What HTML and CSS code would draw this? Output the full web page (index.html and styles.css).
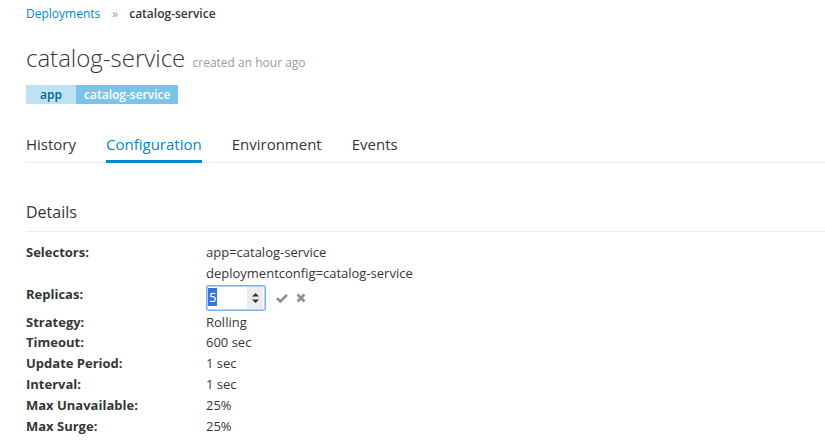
FILE: index.html
```html
<!DOCTYPE html>
<html>
<head>
<meta charset="utf-8">
<link rel="stylesheet" href="styles.css">
</head>
<body>
<div class="page">
  <ol class="breadcrumb">
    <li><a href="#">Deployments</a></li>
    <li class="sep">»</li>
    <li class="current">catalog-service</li>
  </ol>
  <h1 class="title">catalog-service <small>created an hour ago</small></h1>
  <div class="labels">
    <span class="lbl-key">app</span><span class="lbl-val">catalog-service</span>
  </div>
  <ul class="tabs">
    <li>History</li>
    <li class="active">Configuration</li>
    <li>Environment</li>
    <li>Events</li>
  </ul>
  <h2 class="section">Details</h2>
  <dl class="details">
    <dt>Selectors:</dt>
    <dd>app=catalog-service<br>deploymentconfig=catalog-service</dd>
    <dt>Replicas:</dt>
    <dd class="replicas-dd">
      <span class="spin"><span class="spin-val"><span class="sel">5</span></span><span class="spin-btn"><svg width="9" height="14" viewBox="0 0 9 14"><path d="M1 5.5 L4.5 2 L8 5.5 Z" fill="#333"/><path d="M1 8.5 L4.5 12 L8 8.5 Z" fill="#333"/></svg></span></span>
      <svg class="ico" width="12" height="10" viewBox="0 0 12 10"><path d="M1 5.2 L4.3 8.5 L11 1.8" fill="none" stroke="#8b8d8f" stroke-width="2.6"/></svg>
      <svg class="ico" width="10" height="10" viewBox="0 0 10 10"><path d="M1.5 1.5 L8.5 8.5 M8.5 1.5 L1.5 8.5" stroke="#8b8d8f" stroke-width="2.6"/></svg>
    </dd>
    <dt>Strategy:</dt><dd>Rolling</dd>
    <dt>Timeout:</dt><dd>600 sec</dd>
    <dt>Update Period:</dt><dd>1 sec</dd>
    <dt>Interval:</dt><dd>1 sec</dd>
    <dt>Max Unavailable:</dt><dd>25%</dd>
    <dt>Max Surge:</dt><dd>25%</dd>
  </dl>
</div>
</body>
</html>
```
FILE: styles.css
```css
html, body { margin: 0; padding: 0; background: #fff; }
body {
  font-family: "Open Sans", "Noto Sans", sans-serif;
  font-size: 12px;
  color: #363636;
  overflow: hidden;
}
.page { padding: 0 0 0 26px; }
.breadcrumb {
  list-style: none; margin: 0; padding: 4px 0 0;
  display: flex; align-items: center; height: 20px; line-height: 20px;
}
.breadcrumb a { color: #0088ce; text-decoration: none; }
.breadcrumb .sep { color: #9c9c9c; margin: 0 11px 0 12px; font-size: 12px; }
.breadcrumb .current { font-weight: 600; color: #363636; }
.title {
  margin: 18px 0 0; font-size: 24px; font-weight: 300; line-height: 32px;
  color: #363636; height: 32px;
}
.title small { font-size: 12px; color: #9c9c9c; font-weight: 400; margin-left: 1px; }
.labels { display: flex; margin-top: 11px; height: 19px; line-height: 19px; }
.lbl-key {
  background: #bee1f4; color: #00659c; font-weight: 600; width: 50px;
  text-align: center; border-radius: 1px 0 0 1px;
}
.lbl-val {
  background: #7dc3e8; color: #fff; font-weight: 600; padding: 0 8px;
  border-radius: 0 1px 1px 0;
}
.tabs {
  list-style: none; margin: 24px 0 0; padding: 0; display: flex;
  border-bottom: 1px solid #ededed; height: 34px;
}
.tabs li {
  font-size: 15px; line-height: 22px; padding-top: 5px; height: 29px; margin-right: 30px;
  color: #363636; position: relative;
}
.tabs li.active { color: #0088ce; }
.tabs li.active::after {
  content: ""; position: absolute; left: 0; right: 0; bottom: -1px; height: 3px;
  background: #0088ce;
}
.section {
  margin: 38px 0 0; font-size: 16px; font-weight: 400; line-height: 22px;
  color: #363636; padding-bottom: 8px; border-bottom: 1px solid #ededed;
}
.details {
  display: grid; grid-template-columns: 180px 1fr; margin: 10px 0 0;
  font-size: 13px; line-height: 20.8px;
}
.details dt { font-weight: 700; margin: 0; }
.details dd { margin: 0; }
.replicas-dd { display: flex; align-items: center; height: 28px; }
.spin {
  display: inline-flex; width: 60px; height: 26px; box-sizing: border-box;
  border: 1px solid #7dafeb; border-radius: 2px; box-shadow: 0 0 0 1px #b6d4f5 inset;
  align-items: center; background: #fff;
}
.spin-val { flex: 1; padding-left: 1px; font-size: 13px; line-height: 17px; }
.spin-val .sel { background: #3875d7; color: #fff; padding: 0 1px; }
.spin-btn {
  width: 16px; height: 22px; background: #ececec; margin-right: 2px;
  display: flex; align-items: center; justify-content: center;
}
.ico { margin-left: 10px; }
.ico + .ico { margin-left: 8px; }
```
